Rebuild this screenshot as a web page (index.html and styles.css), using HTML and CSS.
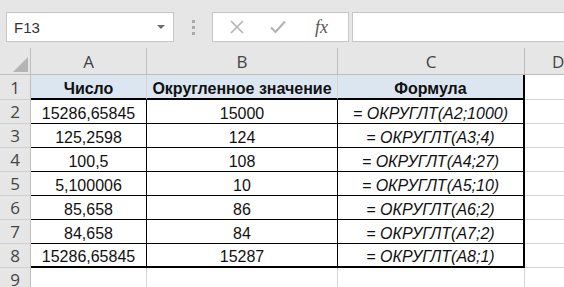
FILE: index.html
```html
<!DOCTYPE html>
<html lang="ru">

<head>
    <meta charset="UTF-8">
    <meta name="viewport" content="width=device-width, initial-scale=1.0">
    <title>ОКРУГЛТ</title>
    <link rel="stylesheet" href="styles.css">
</head>

<body>
    <div class="toolbar">
        <div class="nameBox">
            <span>F13</span>
            <span class="arrow"></span>
        </div>
        <div class="grip"><span></span><span></span><span></span></div>
        <div class="buttons">
            <svg class="btn cancel" width="16" height="16" viewBox="0 0 16 16">
                <path d="M2 2 L14 14 M14 2 L2 14" stroke="#b3b3b3" stroke-width="1.6" fill="none" />
            </svg>
            <svg class="btn enter" width="18" height="16" viewBox="0 0 18 16">
                <path d="M2 8.5 L6.5 13 L16 2.5" stroke="#b3b3b3" stroke-width="2.2" fill="none" />
            </svg>
            <span class="fx">fx</span>
        </div>
        <div class="formula"></div>
    </div>

    <div class="sheet">
        <div class="corner"><span class="tri"></span></div>
        <div class="colHead">A</div>
        <div class="colHead">B</div>
        <div class="colHead">C</div>
        <div class="colHead last">D</div>

        <div class="rowHead">1</div>
        <div class="cell title">Число</div>
        <div class="cell title">Округленное значение</div>
        <div class="cell title right">Формула</div>
        <div class="cell empty"></div>

        <div class="rowHead">2</div>
        <div class="cell data">15286,65845</div>
        <div class="cell data">15000</div>
        <div class="cell data right f">= ОКРУГЛТ(A2;1000)</div>
        <div class="cell empty"></div>

        <div class="rowHead">3</div>
        <div class="cell data">125,2598</div>
        <div class="cell data">124</div>
        <div class="cell data right f">= ОКРУГЛТ(A3;4)</div>
        <div class="cell empty"></div>

        <div class="rowHead">4</div>
        <div class="cell data">100,5</div>
        <div class="cell data">108</div>
        <div class="cell data right f">= ОКРУГЛТ(A4;27)</div>
        <div class="cell empty"></div>

        <div class="rowHead">5</div>
        <div class="cell data">5,100006</div>
        <div class="cell data">10</div>
        <div class="cell data right f">= ОКРУГЛТ(A5;10)</div>
        <div class="cell empty"></div>

        <div class="rowHead">6</div>
        <div class="cell data">85,658</div>
        <div class="cell data">86</div>
        <div class="cell data right f">= ОКРУГЛТ(A6;2)</div>
        <div class="cell empty"></div>

        <div class="rowHead">7</div>
        <div class="cell data">84,658</div>
        <div class="cell data">84</div>
        <div class="cell data right f">= ОКРУГЛТ(A7;2)</div>
        <div class="cell empty"></div>

        <div class="rowHead">8</div>
        <div class="cell data bottom">15286,65845</div>
        <div class="cell data bottom">15287</div>
        <div class="cell data right bottom f">= ОКРУГЛТ(A8;1)</div>
        <div class="cell empty"></div>

        <div class="rowHead">9</div>
        <div class="cell empty"></div>
        <div class="cell empty"></div>
        <div class="cell empty"></div>
        <div class="cell empty"></div>
    </div>
</body>

</html>
```

FILE: styles.css
```css
body {
    margin: 0;
    width: 564px;
    height: 287px;
    overflow: hidden;
    background-color: #e6e6e6;
    font-family: "Liberation Sans", Arial, sans-serif;
}

.toolbar {
    display: flex;
    align-items: flex-start;
    height: 48px;
    padding: 12px 0 0 6px;
    box-sizing: border-box;
}

.nameBox {
    display: flex;
    align-items: center;
    justify-content: space-between;
    width: 168px;
    height: 30px;
    padding: 0 8px 0 7px;
    box-sizing: border-box;
    background-color: white;
    border: 1px solid #c6c6c6;
    font-size: 15px;
    color: #333;
}

.arrow {
    width: 0;
    height: 0;
    border-left: 4px solid transparent;
    border-right: 4px solid transparent;
    border-top: 4px solid #6d6d6d;
}

.grip {
    display: flex;
    flex-direction: column;
    align-items: center;
    justify-content: center;
    gap: 3px;
    width: 38px;
    height: 30px;
}

.grip span {
    width: 3px;
    height: 3px;
    background-color: #a9a9a9;
}

.buttons {
    display: flex;
    align-items: center;
    width: 137px;
    height: 30px;
    box-sizing: border-box;
    background-color: white;
    border: 1px solid #c6c6c6;
    padding-left: 16px;
}

.cancel {
    margin-right: 24px;
}

.enter {
    margin-right: 28px;
}

.fx {
    font-family: "Liberation Serif", serif;
    font-style: italic;
    font-size: 18px;
    color: #555;
}

.formula {
    flex: 1;
    height: 30px;
    margin-left: 3px;
    margin-right: -2px;
    box-sizing: border-box;
    background-color: white;
    border: 1px solid #c6c6c6;
}

.sheet {
    display: grid;
    grid-template-columns: 31px 116px 191px 187px 60px;
    grid-template-rows: 27px 25px repeat(8, 24px);
    background-color: white;
}

.sheet > div {
    box-sizing: border-box;
    display: flex;
    align-items: flex-end;
    justify-content: center;
    white-space: nowrap;
}

.corner {
    position: relative;
    background-color: #e6e6e6;
    border-right: 1px solid #bdbdbd;
    border-bottom: 1px solid #bdbdbd;
}

.tri {
    position: absolute;
    right: 2px;
    bottom: 2px;
    width: 0;
    height: 0;
    border-left: 15px solid transparent;
    border-bottom: 15px solid #b4b4b4;
}

.colHead {
    background-color: #e6e6e6;
    border-right: 1px solid #bdbdbd;
    border-bottom: 1px solid #bdbdbd;
    font-family: "Open Sans", sans-serif;
    font-size: 17px;
    color: #444;
    padding-bottom: 1px;
}

.colHead.last {
    justify-content: flex-start;
    padding-left: 27px;
}

.rowHead {
    background-color: #e6e6e6;
    border-right: 1px solid #bdbdbd;
    border-bottom: 1px solid #d0d0d0;
    font-family: "Open Sans", sans-serif;
    font-size: 17px;
    color: #444;
}

.cell {
    font-size: 16px;
    color: #111;
    padding-bottom: 0;
    border-right: 1px solid #d4d4d4;
    border-bottom: 1px solid #d4d4d4;
}

.title {
    background-color: #dce6f1;
    font-weight: bold;
    border-bottom: 2px solid black;
}

.data {
    border-right: 1px solid black;
    border-bottom: 1px solid black;
}

.right {
    border-right: 2px solid black;
}

.bottom {
    border-bottom: 2px solid black;
}

.f {
    font-style: italic;
}
```
